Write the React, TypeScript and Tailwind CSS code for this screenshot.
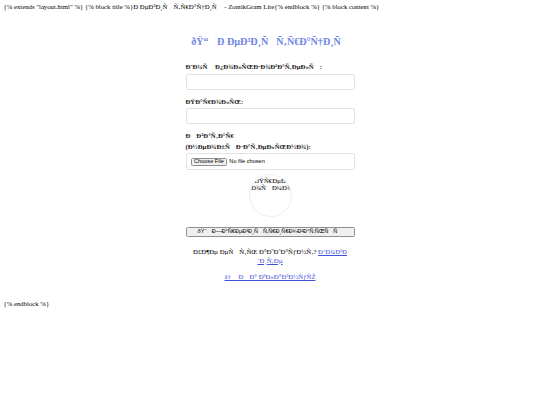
import React from 'react';

// page text as the browser shows it (UTF-8 read as windows-1252)
const HEADER = '{% extends "layout.html" %} {% block title %}Ð\u00a0ÐµÐ³Ð¸Ñ\u0081Ñ‚Ñ€Ð°Ñ†Ð¸Ñ\u008f - ZontikGram Lite{% endblock %} {% block content %}';
const TITLE = 'ðŸ“\u009d Ð\u00a0ÐµÐ³Ð¸Ñ\u0081Ñ‚Ñ€Ð°Ñ†Ð¸Ñ\u008f';
const LABEL_USER = 'Ð˜Ð¼Ñ\u008f Ð¿Ð¾Ð»ÑŒÐ·Ð¾Ð²Ð°Ñ‚ÐµÐ»Ñ\u008f:';
const LABEL_PASS = 'ÐŸÐ°Ñ€Ð¾Ð»ÑŒ:';
const LABEL_AVATAR = 'Ð\u0090Ð²Ð°Ñ‚Ð°Ñ€ (Ð½ÐµÐ¾Ð±Ñ\u008fÐ·Ð°Ñ‚ÐµÐ»ÑŒÐ½Ð¾):';
const PREVIEW_TOP = 'ÐŸÑ€ÐµÐ';
const PREVIEW_BOTTOM = '´Ð¿Ñ€Ð¾Ñ\u0081Ð¼Ð¾Ñ‚Ñ€';
const SUBMIT = 'ðŸ“\u009d Ð—Ð°Ñ€ÐµÐ³Ð¸Ñ\u0081Ñ‚Ñ€Ð¸Ñ€Ð¾Ð²Ð°Ñ‚ÑŒÑ\u0081Ñ\u008f';
const HAVE_ACCOUNT = 'Ð£Ð¶Ðµ ÐµÑ\u0081Ñ‚ÑŒ Ð°ÐºÐºÐ°ÑƒÐ½Ñ‚? ';
const LOGIN = 'Ð’Ð¾Ð¹Ð´Ð¸Ñ‚Ðµ';
const BACK = 'â†\u0090 Ð\u009dÐ° Ð³Ð»Ð°Ð²Ð½ÑƒÑŽ';

const Label: React.FC<{ children: React.ReactNode }> = ({ children }) => (
  <label className="block pt-[1px] text-[6.75px] font-bold leading-[10.8px] mb-[0.6px] text-[#222]">{children}</label>
);

const Field: React.FC<{ label: string; type?: string }> = ({ label, type = 'text' }) => (
  <div>
    <Label>{label}</Label>
    <input
      type={type}
      className="block w-full h-[16px] bg-white border border-[#e2e2e2] rounded-[2px] mb-[6px] outline-none"
    />
  </div>
);

const App: React.FC = () => {
  return (
    <div className="min-h-screen bg-white p-[3.4px] text-black font-['Liberation_Serif',serif]">
      <div className="text-[6.75px] leading-[7.8px]">{HEADER}</div>

      <div className="w-[169px] mx-auto mt-[23px]">
        <h2 className="text-center text-[10.1px] leading-[16px] font-bold text-[#7085e4] whitespace-nowrap">{TITLE}</h2>

        <form className="mt-[11px]" onSubmit={(e) => e.preventDefault()}>
          <Field label={LABEL_USER} />
          <Field label={LABEL_PASS} type="password" />

          <Label>{LABEL_AVATAR}</Label>
          <div className="h-[17px] bg-white border border-[#e2e2e2] rounded-[2px] flex items-center px-[4px] gap-[2px] font-['Liberation_Sans',sans-serif]">
            <span className="h-[8px] px-[2.5px] flex items-center bg-[#efefef] border border-[#8f8f8f] rounded-[1.5px] text-[5.6px] text-black">
              Choose File
            </span>
            <span className="text-[5.6px] text-black">No file chosen</span>
          </div>

          {/* avatar preview: broken image, alt text shows */}
          <div className="mx-auto mt-[4px] w-[43px] h-[43px] rounded-full border border-[#eeeeee] overflow-hidden flex flex-col items-center pt-[1.5px]">
            <span className="text-[6.75px] leading-[7.8px] whitespace-nowrap">{PREVIEW_TOP}</span>
            <span className="text-[6.75px] leading-[7.8px] whitespace-nowrap">{PREVIEW_BOTTOM}</span>
          </div>

          <button
            type="submit"
            className="mt-[10px] w-full h-[10px] flex items-center justify-center bg-[#efefef] border border-[#8f8f8f] rounded-[1.5px] text-[5.6px] leading-none text-black font-['Liberation_Sans',sans-serif]"
          >
            {SUBMIT}
          </button>
        </form>

        <p className="mt-[9.5px] text-center text-[6.75px] leading-[9px]">
          {HAVE_ACCOUNT}
          <a href="#" className="text-[#3f51d8] underline">{LOGIN}</a>
        </p>
        <p className="mt-[7px] text-center text-[6.75px] leading-[9px]">
          <a href="#" className="text-[#3f51d8] underline">{BACK}</a>
        </p>
      </div>

      <div className="mt-[19px] text-[6.75px] leading-[7.8px]">{'{% endblock %}'}</div>
    </div>
  );
};

export default App;
